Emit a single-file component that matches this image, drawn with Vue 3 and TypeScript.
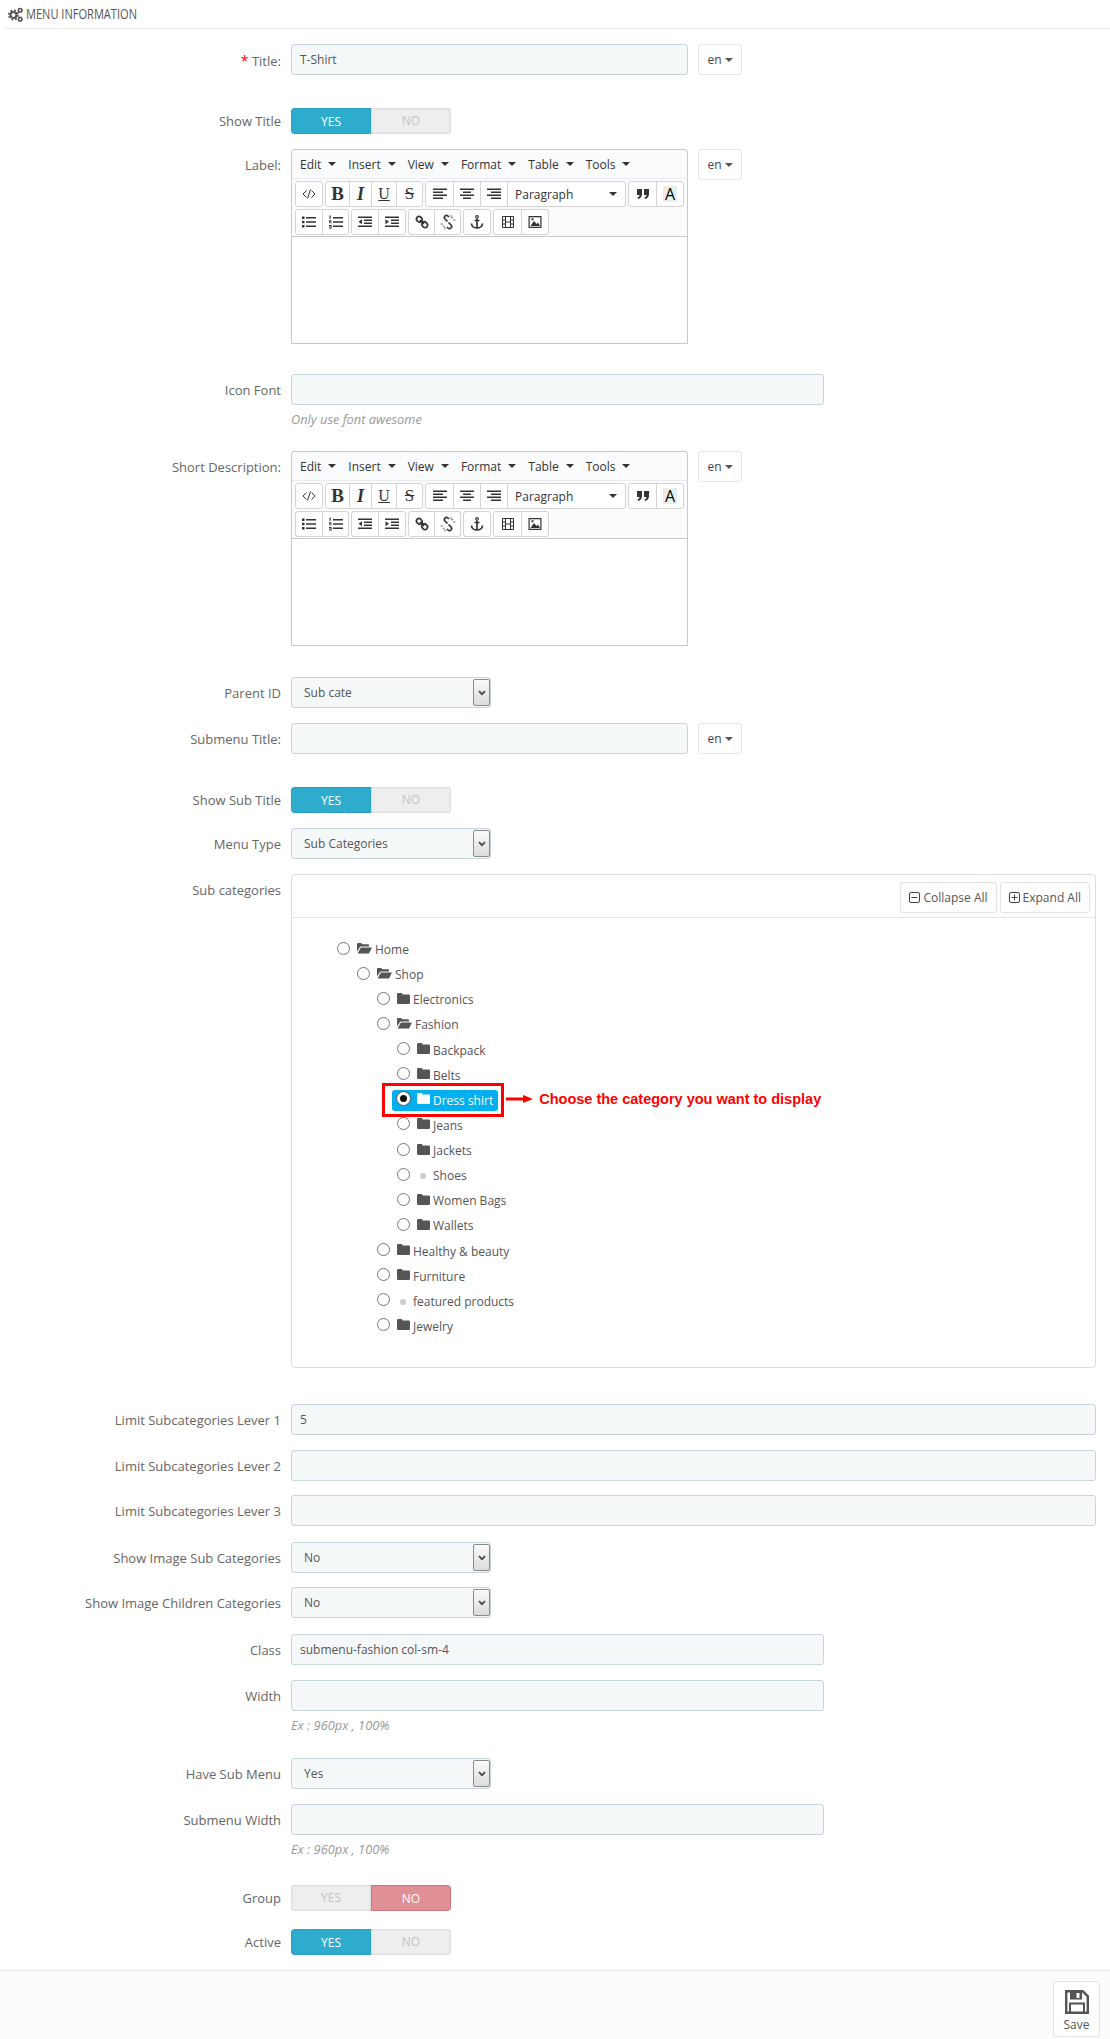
<script setup lang="ts">
interface Tool { w: number; icon?: string; text?: string; cls?: string }
interface Row {
  kind: 'input' | 'switch' | 'editor' | 'select' | 'tree'
  label: string
  value?: string
  req?: boolean
  lang?: boolean
  wide?: boolean
  hint?: string
  yes?: boolean
  gap: number
}
interface Node { name: string; level: number; type: 'open' | 'closed' | 'dot'; sel?: boolean }

const menus = ['Edit', 'Insert', 'View', 'Format', 'Table', 'Tools']

const strokeIcons: Record<string, string> = {
  code: 'M5.5 4.5 2 8l3.5 3.5M10.5 4.5 14 8l-3.5 3.5M9.5 3.5l-3 9',
  link: 'M3.2 3.2a2.6 2.6 0 0 1 3.6 0l.6.6a2.6 2.6 0 0 1 0 3.6 2.6 2.6 0 0 1-3.6 0l-.6-.6a2.6 2.6 0 0 1 0-3.6zM8.6 8.6a2.6 2.6 0 0 1 3.6 0l.6.6a2.6 2.6 0 0 1 0 3.6 2.6 2.6 0 0 1-3.6 0l-.6-.6a2.6 2.6 0 0 1 0-3.6zM6 6l4 4',
  unlink: 'M7.5 7.5 5 5a2.2 2.2 0 0 1 0-3 2.2 2.2 0 0 1 3 0l1 1M8.5 8.5 11 11a2.2 2.2 0 0 1 0 3 2.2 2.2 0 0 1-3 0l-1-1',
  anchor: 'M8 4.5v9.5M5.5 6.5h5M2.5 9.5c0 3 3 4.5 5.5 4.5s5.5-1.5 5.5-4.5',
  media: 'M2.5 2.5h11v11h-11zM5.5 2.5v11M10.5 2.5v11M2.5 6h3M2.5 10h3M10.5 6h3M10.5 10h3M5.5 8h5',
}
const fillIcons: Record<string, string> = {
  left: 'M1 2.5h14V4H1zM1 5.5h10V7H1zM1 8.5h14V10H1zM1 11.5h10V13H1z',
  center: 'M1 2.5h14V4H1zM4 5.5h8V7H4zM1 8.5h14V10H1zM4 11.5h8V13H4z',
  right: 'M1 2.5h14V4H1zM5 5.5h10V7H5zM1 8.5h14V10H1zM5 11.5h10V13H5z',
  quote: 'M2 3h5v5c0 3-2 4.5-4 5l-.5-1.5c1-.3 2-1.2 2-2.5H2zM9 3h5v5c0 3-2 4.5-4 5l-.5-1.5c1-.3 2-1.2 2-2.5H9z',
  bullist: 'M1 2.5h2.5V5H1zM5 3h10v1.5H5zM1 6.7h2.5v2.5H1zM5 7.2h10v1.5H5zM1 11h2.5v2.5H1zM5 11.5h10V13H5z',
  numlist: 'M1.5 1.5h1.2v3.3H1.5zM1 6.2h2.5v.8H1.9v.5h1.6v1.7H1v-.8h1.6v-.5H1zM1 11h2.6v3.4H1v-.8h1.7v-.5H1.4v-.7h1.3v-.5H1zM5 3h10v1.5H5zM5 7.2h10v1.5H5zM5 11.5h10V13H5z',
  outdent: 'M1 2.5h14V4H1zM7 5.5h8V7H7zM7 8.5h8V10H7zM1 11.5h14V13H1zM5 5.2v5L1.5 7.7z',
  indent: 'M1 2.5h14V4H1zM7 5.5h8V7H7zM7 8.5h8V10H7zM1 11.5h14V13H1zM1.5 5.2v5L5 7.7z',
  image: 'M1.5 2h13v12h-13zM2.7 3.2v9.6h10.6V3.2zM3.5 12l3.5-5 2.5 3 1.5-1.5 2 3.5zM4.5 4.2h2v2h-2z',
  anchorTop: 'M8 1a1.9 1.9 0 1 0 .01 0zM8 2.2a.7.7 0 1 1-.01 0z',
  rays: 'M10.5 1h1v2.5h-1zM12.8 2.5l.7.7-1.6 1.6-.7-.7zM13 5.5h2.5v1H13zM.5 9.5H3v1H.5zM2.5 12.8l1.6-1.6.7.7-1.6 1.6zM4.5 13h1v2.5h-1z',
}

const row1: Tool[][] = [
  [{ w: 26, icon: 'code' }],
  [
    { w: 23, text: 'B', cls: 'bold' },
    { w: 22, text: 'I', cls: 'ital' },
    { w: 25, text: 'U', cls: 'under' },
    { w: 26, text: 'S', cls: 'strike' },
  ],
  [
    { w: 27, icon: 'left' },
    { w: 27, icon: 'center' },
    { w: 27, icon: 'right' },
    { w: 118, text: 'Paragraph', cls: 'para' },
  ],
  [
    { w: 27, icon: 'quote' },
    { w: 27, text: 'A', cls: 'color' },
  ],
]
const row2: Tool[][] = [
  [{ w: 26, icon: 'bullist' }, { w: 26, icon: 'numlist' }],
  [{ w: 26, icon: 'outdent' }, { w: 27, icon: 'indent' }],
  [{ w: 25, icon: 'link' }, { w: 26, icon: 'unlink' }],
  [{ w: 26, icon: 'anchor' }],
  [{ w: 27, icon: 'media' }, { w: 27, icon: 'image' }],
]
const toolbars = [row1, row2]

const rows: Row[] = [
  { kind: 'input', label: 'Title:', value: 'T-Shirt', req: true, lang: true, gap: 33 },
  { kind: 'switch', label: 'Show Title', yes: true, gap: 15 },
  { kind: 'editor', label: 'Label:', gap: 30 },
  { kind: 'input', label: 'Icon Font', wide: true, hint: 'Only use font awesome', gap: 23 },
  { kind: 'editor', label: 'Short Description:', gap: 31 },
  { kind: 'select', label: 'Parent ID', value: 'Sub cate', gap: 15 },
  { kind: 'input', label: 'Submenu Title:', lang: true, gap: 33 },
  { kind: 'switch', label: 'Show Sub Title', yes: true, gap: 15 },
  { kind: 'select', label: 'Menu Type', value: 'Sub Categories', gap: 15 },
  { kind: 'tree', label: 'Sub categories', gap: 36 },
  { kind: 'input', label: 'Limit Subcategories Lever 1', value: '5', gap: 15 },
  { kind: 'input', label: 'Limit Subcategories Lever 2', gap: 14 },
  { kind: 'input', label: 'Limit Subcategories Lever 3', gap: 16 },
  { kind: 'select', label: 'Show Image Sub Categories', value: 'No', gap: 14 },
  { kind: 'select', label: 'Show Image Children Categories', value: 'No', gap: 16 },
  { kind: 'input', label: 'Class', value: 'submenu-fashion col-sm-4', wide: true, gap: 15 },
  { kind: 'input', label: 'Width', wide: true, hint: 'Ex : 960px , 100%', gap: 24 },
  { kind: 'select', label: 'Have Sub Menu', value: 'Yes', gap: 15 },
  { kind: 'input', label: 'Submenu Width', wide: true, hint: 'Ex : 960px , 100%', gap: 27 },
  { kind: 'switch', label: 'Group', yes: false, gap: 18 },
  { kind: 'switch', label: 'Active', yes: true, gap: 15 },
]

const nodes: Node[] = [
  { name: 'Home', level: 0, type: 'open' },
  { name: 'Shop', level: 1, type: 'open' },
  { name: 'Electronics', level: 2, type: 'closed' },
  { name: 'Fashion', level: 2, type: 'open' },
  { name: 'Backpack', level: 3, type: 'closed' },
  { name: 'Belts', level: 3, type: 'closed' },
  { name: 'Dress shirt', level: 3, type: 'closed', sel: true },
  { name: 'Jeans', level: 3, type: 'closed' },
  { name: 'Jackets', level: 3, type: 'closed' },
  { name: 'Shoes', level: 3, type: 'dot' },
  { name: 'Women Bags', level: 3, type: 'closed' },
  { name: 'Wallets', level: 3, type: 'closed' },
  { name: 'Healthy & beauty', level: 2, type: 'closed' },
  { name: 'Furniture', level: 2, type: 'closed' },
  { name: 'featured products', level: 2, type: 'dot' },
  { name: 'Jewelry', level: 2, type: 'closed' },
]
</script>

<template>
  <div class="page">
    <div class="heading">
      <svg class="cogs" viewBox="0 0 16 16" aria-hidden="true">
        <circle cx="5.8" cy="8.5" r="3.2" fill="none" stroke="#555" stroke-width="2.2" />
        <circle cx="5.8" cy="8.5" r="5" fill="none" stroke="#555" stroke-width="1.8" stroke-dasharray="2 1.93" />
        <circle cx="13" cy="3.5" r="1.9" fill="none" stroke="#555" stroke-width="1.7" />
        <circle cx="13" cy="13" r="1.9" fill="none" stroke="#555" stroke-width="1.7" />
      </svg>
      <span class="heading-text">MENU INFORMATION</span>
    </div>

    <div class="form">
      <div v-for="r in rows" :key="r.label" class="row" :style="{ marginBottom: r.gap + 'px' }">
        <label class="label" :class="{ short: r.kind === 'switch' }">
          <span v-if="r.req" class="req">*</span> {{ r.label }}
        </label>

        <div class="control">
          <template v-if="r.kind === 'input'">
            <div class="input-line">
              <div class="input" :class="{ wide: r.wide, full: !r.wide && !r.lang }">{{ r.value }}</div>
              <div v-if="r.lang" class="lang">en<i class="caret"></i></div>
            </div>
            <div v-if="r.hint" class="hint">{{ r.hint }}</div>
          </template>

          <div v-else-if="r.kind === 'switch'" class="switch">
            <span class="sw" :class="r.yes ? 'sw-yes' : 'sw-off'">YES</span>
            <span class="sw" :class="r.yes ? 'sw-off' : 'sw-no'">NO</span>
          </div>

          <div v-else-if="r.kind === 'select'" class="select">
            <span class="select-text">{{ r.value }}</span>
            <span class="select-arrow">
              <svg viewBox="0 0 8 6" width="8" height="6" aria-hidden="true">
                <path d="M1 1.2 4 4.2l3-3" fill="none" stroke="#444" stroke-width="1.7" />
              </svg>
            </span>
          </div>

          <div v-else-if="r.kind === 'editor'" class="input-line">
            <div class="editor">
              <div class="menubar">
                <span v-for="m in menus" :key="m" class="menu">{{ m }}<i class="caret dark"></i></span>
              </div>
              <div class="toolbar">
                <div v-for="(tb, ti) in toolbars" :key="ti" class="tool-row">
                  <div v-for="(g, gi) in tb" :key="gi" class="tool-group">
                    <span
                      v-for="(t, i) in g"
                      :key="i"
                      class="tool"
                      :class="t.cls"
                      :style="{ width: t.w + 'px' }"
                    >
                      <svg v-if="t.icon" viewBox="0 0 16 16" width="16" height="16" aria-hidden="true">
                        <path v-if="fillIcons[t.icon]" :d="fillIcons[t.icon]" fill="#333" fill-rule="evenodd" />
                        <path v-if="strokeIcons[t.icon]" :d="strokeIcons[t.icon]" fill="none" stroke="#333"
                          :stroke-width="t.icon === 'code' || t.icon === 'media' ? 1 : 1.7" />
                        <path v-if="t.icon === 'anchor'" :d="fillIcons.anchorTop" fill="#333" fill-rule="evenodd" />
                        <path v-if="t.icon === 'unlink'" :d="fillIcons.rays" fill="#777" />
                      </svg>
                      <template v-else-if="t.cls === 'para'">
                        <span>{{ t.text }}</span><i class="caret dark"></i>
                      </template>
                      <template v-else>{{ t.text }}</template>
                    </span>
                  </div>
                </div>
              </div>
              <div class="editor-body"></div>
            </div>
            <div class="lang">en<i class="caret"></i></div>
          </div>

          <div v-else class="panel">
            <div class="panel-head">
              <span class="btn">
                <svg viewBox="0 0 11 11" width="11" height="11" aria-hidden="true">
                  <rect x=".5" y=".5" width="10" height="10" rx="1.5" fill="none" stroke="#444" />
                  <path d="M2.5 5.5h6" stroke="#444" />
                </svg>
                Collapse All
              </span>
              <span class="btn">
                <svg viewBox="0 0 11 11" width="11" height="11" aria-hidden="true">
                  <rect x=".5" y=".5" width="10" height="10" rx="1.5" fill="none" stroke="#444" />
                  <path d="M2.5 5.5h6M5.5 2.5v6" stroke="#444" />
                </svg>
                Expand All
              </span>
            </div>
            <div class="tree">
              <div
                v-for="n in nodes"
                :key="n.name"
                class="node"
                :style="{ paddingLeft: 20 * n.level + (n.sel ? 0 : 5) + 'px' }"
              >
                <div class="node-inner" :class="{ selected: n.sel }">
                  <span class="radio" :class="{ on: n.sel }"></span>
                  <svg v-if="n.type === 'open'" class="folder open" viewBox="0 0 15 12" aria-hidden="true">
                    <path d="M0 2a1 1 0 0 1 1-1h3.2l1 1.2H11a1 1 0 0 1 1 1V4.5H3.4L0 9.6zM3.9 5.5H15l-3 6H.6z" />
                  </svg>
                  <svg v-else-if="n.type === 'closed'" class="folder" viewBox="0 0 13 11" aria-hidden="true">
                    <path d="M1.2 0h3.2a1 1 0 0 1 1 .8l.2.7h6.2A1.2 1.2 0 0 1 13 2.7v7.1a1.2 1.2 0 0 1-1.2 1.2H1.2A1.2 1.2 0 0 1 0 9.8V1.2A1.2 1.2 0 0 1 1.2 0z" />
                  </svg>
                  <span v-else class="dot"></span>
                  <span class="name">{{ n.name }}</span>
                  <template v-if="n.sel">
                    <span class="redbox"></span>
                    <span class="note">
                      <svg viewBox="0 0 27 8" width="27" height="8" aria-hidden="true">
                        <path d="M0 2.4h17V0l10 4-10 4V5.6H0z" fill="#f00" />
                      </svg>
                      Choose the category you want to display
                    </span>
                  </template>
                </div>
              </div>
            </div>
          </div>
        </div>
      </div>
    </div>

    <div class="footer">
      <div class="save">
        <svg viewBox="0 0 24 24" width="24" height="24" aria-hidden="true">
          <path d="M1.2 1.2h16.5l5.1 5.1v16.5H1.2z" fill="none" stroke="#555" stroke-width="2.4" />
          <path d="M5 1.5h12v8H5zM11.5 3v5h3V3z" fill="#555" fill-rule="evenodd" />
          <path d="M5 22.5V13.5h14v9" fill="none" stroke="#555" stroke-width="2" />
        </svg>
        <span>Save</span>
      </div>
    </div>
  </div>
</template>

<style scoped>
.page {
  width: 1110px;
  height: 2039px;
  overflow: hidden;
  background: #fff;
  font-family: "Open Sans", sans-serif;
  font-size: 12px;
  color: #555;
  display: flex;
  flex-direction: column;
}
.heading {
  height: 29px;
  flex: none;
  box-sizing: border-box;
  margin: 0 0 15px 3px;
  padding-left: 5px;
  border-bottom: 1px solid #eee;
  display: flex;
  align-items: center;
  gap: 3px;
  color: #555;
}
.cogs { width: 15px; height: 15px; flex: none; }
.heading-text {
  font-size: 14px;
  line-height: 26px;
  display: inline-block;
  white-space: nowrap;
  transform: scaleX(0.79);
  transform-origin: left center;
}
.form { flex: 1; }
.row { display: flex; align-items: flex-start; }
.label {
  width: 281px;
  height: 31px;
  flex: none;
  text-align: right;
  line-height: 33px;
  color: #666;
  font-size: 13px;
  white-space: pre-wrap;
}
.label.short { height: 26px; line-height: 27px; }
.req { color: #f00; font-size: 14px; }
.control { margin-left: 10px; width: 805px; flex: none; }
.input-line { display: flex; align-items: flex-start; gap: 10px; }
.input {
  width: 397px;
  height: 31px;
  box-sizing: border-box;
  padding: 0 8px;
  line-height: 29px;
  background: #f5f8f9;
  border: 1px solid #c7d6db;
  border-radius: 3px;
  color: #555;
}
.input.wide { width: 533px; }
.input.full { width: 805px; }
.lang {
  width: 44px;
  height: 31px;
  box-sizing: border-box;
  background: #fff;
  border: 1px solid #e3e6e8;
  border-radius: 3px;
  display: flex;
  align-items: center;
  justify-content: center;
  gap: 3px;
  color: #444;
}
.caret {
  width: 0;
  height: 0;
  border-left: 4px solid transparent;
  border-right: 4px solid transparent;
  border-top: 4px solid #555;
}
.caret.dark { border-top-color: #333; }
.hint {
  margin-top: 5px;
  line-height: 18px;
  font-size: 12.8px;
  font-style: italic;
  color: #999;
}
.switch {
  width: 160px;
  height: 26px;
  display: flex;
  border-radius: 3px;
  overflow: hidden;
}
.sw {
  width: 80px;
  box-sizing: border-box;
  text-align: center;
  line-height: 25px;
  font-size: 12px;
}
.sw-yes { background: #2eacce; border: 1px solid #2a9fbf; color: #fff; border-radius: 3px 0 0 3px; }
.sw-no { background: #e08f95; border: 1px solid #c9757b; color: #fff; border-radius: 0 3px 3px 0; }
.sw-off {
  background: #eee;
  color: #c4c4c4;
  box-shadow: inset 0 0 3px rgba(0, 0, 0, 0.18);
}
.select {
  width: 200px;
  height: 31px;
  box-sizing: border-box;
  background: #f5f8f9;
  border: 1px solid #c7d6db;
  border-radius: 3px;
  display: flex;
  align-items: center;
}
.select-text { flex: 1; padding-left: 12px; color: #555; }
.select-arrow {
  width: 17px;
  height: 27px;
  box-sizing: border-box;
  background: linear-gradient(#fafafa, #dcdcdc);
  border: 1px solid #8a8a8a;
  border-radius: 2px;
  display: flex;
  align-items: center;
  justify-content: center;
}
.editor {
  width: 397px;
  box-sizing: border-box;
  border: 1px solid #c9c9c9;
  border-radius: 3px 3px 0 0;
  background: #f9fbfd;
}
.menubar {
  height: 29px;
  display: flex;
  align-items: center;
  padding-left: 8px;
  gap: 12px;
  border-bottom: 1px solid #e9ecef;
  box-sizing: border-box;
  color: #333;
}
.menu { display: inline-flex; align-items: center; gap: 7px; }
.toolbar {
  padding: 2px 0 1px 3px;
  border-bottom: 1px solid #c9c9c9;
  display: flex;
  flex-direction: column;
  gap: 2px;
}
.tool-row { display: flex; gap: 2px; height: 26px; }
.tool-group {
  display: flex;
  background: #fff;
  border: 1px solid #d4d4d4;
  border-radius: 3px;
  box-sizing: border-box;
}
.tool {
  height: 24px;
  box-sizing: border-box;
  display: flex;
  align-items: center;
  justify-content: center;
  border-left: 1px solid #d4d4d4;
  color: #333;
  font-family: "Liberation Serif", serif;
  font-size: 15px;
}
.tool:first-child { border-left: 0; }
.tool.bold { font-weight: 700; font-size: 19px; }
.tool.ital { font-style: italic; font-size: 18px; font-weight: 700; }
.tool.under { text-decoration: underline; font-size: 16px; }
.tool.strike { text-decoration: line-through; font-size: 17px; }
.tool.para {
  justify-content: space-between;
  padding: 0 8px 0 7px;
  font-family: "Open Sans", sans-serif;
  font-size: 12px;
}
.tool.color {
  font-family: "Open Sans", sans-serif;
  font-size: 16px;
  color: #000;
  background: linear-gradient(90deg, #fde0e6, #e4f6e4 50%, #e2ecfb);
  background-size: 14px 16px;
  background-position: center;
  background-repeat: no-repeat;
}
.editor-body { height: 106px; background: #fff; }
.panel {
  width: 805px;
  height: 494px;
  box-sizing: border-box;
  border: 1px solid #dcdcdc;
  border-radius: 4px;
}
.panel-head {
  height: 43px;
  box-sizing: border-box;
  border-bottom: 1px solid #e4e4e4;
  padding: 7px 5px 0 0;
  display: flex;
  justify-content: flex-end;
  gap: 3px;
}
.btn {
  height: 31px;
  padding: 0 8px;
  box-sizing: border-box;
  border: 1px solid #e0e3e5;
  border-radius: 3px;
  background: #fff;
  display: inline-flex;
  align-items: center;
  gap: 3px;
}
.tree { padding: 19px 0 0 40px; }
.node { height: 25.13px; display: flex; align-items: center; }
.node-inner {
  position: relative;
  display: inline-flex;
  align-items: center;
  height: 21px;
  border-radius: 3px;
  color: #555;
}
.radio {
  width: 13px;
  height: 13px;
  box-sizing: border-box;
  border: 1px solid #767676;
  border-radius: 50%;
  background: #fff;
  margin-top: -3px;
  flex: none;
}
.folder { width: 13px; height: 11px; margin: -3px 3px 0 7px; fill: #555; flex: none; }
.folder.open { width: 15px; height: 12px; margin-right: 3px; }
.dot {
  width: 6px;
  height: 6px;
  border-radius: 50%;
  background: #ccc;
  margin: 1px 7px 0 10px;
  flex: none;
}
.name { white-space: nowrap; }
.selected {
  background: #00aff0;
  color: #fff;
  padding: 0 5px;
}
.selected .folder { fill: #fff; }
.radio.on { border: 3px solid #fff; background: #111; box-shadow: 0 0 0 1px #666; }
.redbox {
  position: absolute;
  left: -10px;
  right: -6px;
  top: -7px;
  bottom: -6px;
  border: 3px solid #f00;
}
.note {
  position: absolute;
  left: calc(100% + 8px);
  top: 0;
  height: 18px;
  display: flex;
  align-items: center;
  gap: 6px;
  white-space: nowrap;
  color: #f00;
  font-family: "Liberation Sans", sans-serif;
  font-weight: 700;
  font-size: 14.5px;
}
.footer {
  height: 69px;
  flex: none;
  box-sizing: border-box;
  border-top: 1px solid #eaedef;
  background: #fbfcfe;
  padding: 10px 10px 0 0;
  display: flex;
  justify-content: flex-end;
}
.save {
  width: 47px;
  height: 56px;
  box-sizing: border-box;
  background: #fff;
  border: 1px solid #dfe3e6;
  border-radius: 3px;
  display: flex;
  flex-direction: column;
  align-items: center;
  padding-top: 8px;
  gap: 1px;
  color: #555;
  line-height: 20px;
}
</style>

<style>
html, body { background: #fff; }
</style>
